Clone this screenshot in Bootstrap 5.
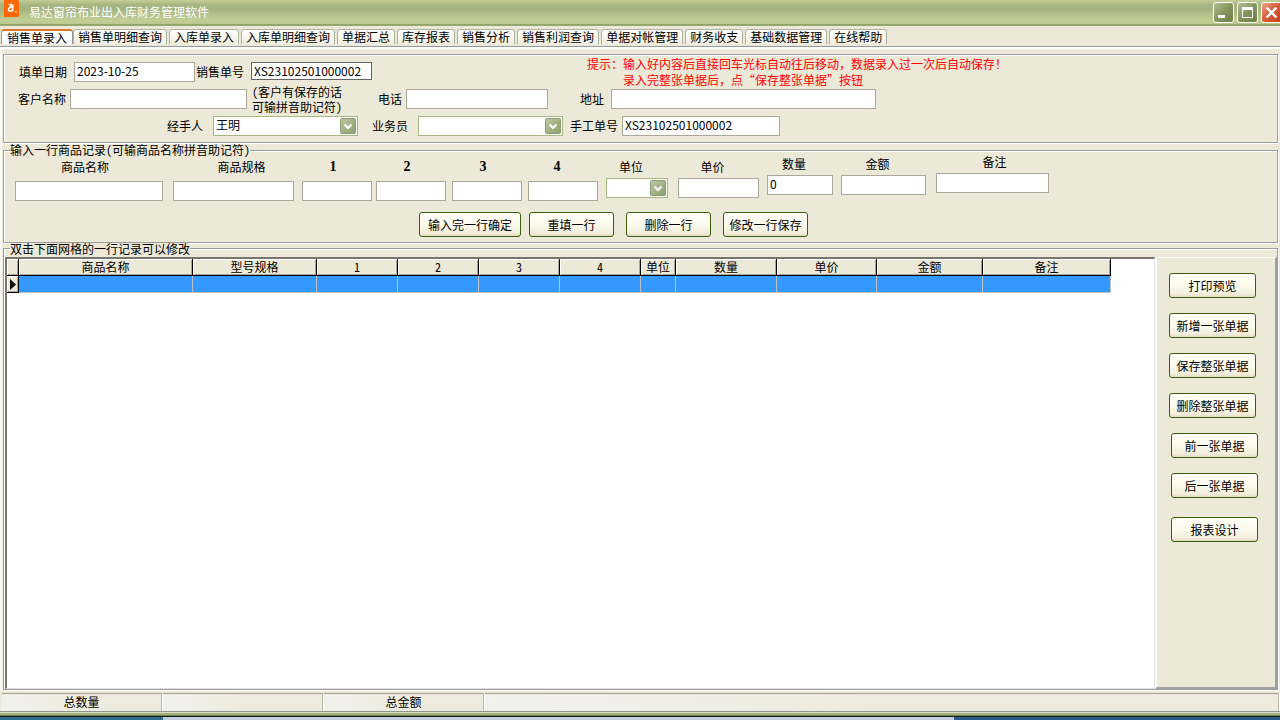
<!DOCTYPE html>
<html lang="zh-CN">
<head>
<meta charset="utf-8">
<meta name="viewport" content="width=device-width, initial-scale=1">
<title>易达窗帘布业出入库财务管理软件</title>
<link href="https://cdn.jsdelivr.net/npm/bootstrap@5.3.0/dist/css/bootstrap.min.css" rel="stylesheet">
<style>
:root{--face:#ece9d8;--edge:#9c9c9c;--field:#aca899}
body{font:12px/14px "Noto Sans CJK SC",sans-serif;font-feature-settings:"hwid";color:#000;background:var(--face)}
label{display:block;white-space:nowrap}
/* title bar */
.titlebar{height:26px;background:linear-gradient(#c3cd96 0,#b9c48d 8%,#a6b581 18%,#a5b47f 35%,#b3c088 55%,#c2cc95 75%,#c0ca93 90%,#93a56c 94%,#9aab72 100%)}
.apptitle{color:#fff;margin:0 0 0 9px;font-size:12px;line-height:24px;font-weight:400}
.winbtns{gap:3px;padding-top:2px;margin-right:-2px}
.winbtn{width:21px;height:21px;padding:0;border:1px solid #fff;border-radius:3px;background:linear-gradient(135deg,#b4be97,#84955c 50%,#6d8146);display:block}
.winbtn svg{display:block}
.winbtn-close{background:linear-gradient(135deg,#eda58c,#d9603c 45%,#c2401a)}
/* tabs */
.tabstrip{height:21px;padding:3px 0 0 1px;border-bottom:1px solid #919b9c;box-shadow:0 2px 0 #fff}
.tabstrip .nav-link{height:15px;margin-right:2px;padding:0 4px;border:1px solid #a9b3a0;border-bottom:0;border-radius:3px 3px 0 0;background:linear-gradient(#fffffb,#f1efe2);color:#000;font-size:12px;line-height:14px;white-space:nowrap}
.tabstrip .nav-link.active{padding:0 5px;margin-right:0;border-color:#919b9c;border-top:2px solid #d9772b;background:#fbfbfc;line-height:13px}
/* group boxes */
.workarea{margin-top:2px;padding:5px 2px 0 1px;border-left:2px solid #f9f9f4}
.groupbox{border:1px solid var(--edge);box-shadow:1px 1px 0 #fff,inset 1px 1px 0 #fff;margin-bottom:1px}
.groupbox legend,.caption{float:none;width:auto;margin:0 0 0 6px;padding:0;font-size:12px;font-weight:400;line-height:12px;background:var(--face)}
.groupbox .caption{align-self:flex-start;margin-top:-6px}
.docform{gap:7px;padding:7px 0 6px 1px}
.formline{display:grid;grid-template-rows:20px;align-items:center;height:20px}
.line-doc{grid-template-columns:69px 121px 56px 121px 215px 1fr}
.line-client{grid-template-columns:65px 177px 127px 32px 142px 63px 265px 1fr}
.line-staff{grid-template-columns:208px 145px 60px 145px 59px 158px 1fr}
.formline label{text-align:right;padding-right:7px}
.formline label.near{padding-right:4px}
.formline label.far{padding-right:10px}
.tip{color:#f00;line-height:16px;white-space:nowrap;font-feature-settings:normal}
.tip span{padding-left:36px}
.clienthint{padding-left:5px;line-height:15px;white-space:nowrap}
.box{display:block;width:100%;height:20px;padding:0 0 3px 2px;border:1px solid var(--field);border-radius:0;background:#fff;color:#000;font-size:12px;line-height:14px}
.box-locked{height:18px;border-color:#646464;padding-bottom:1px;margin-bottom:2px}
select.box{appearance:none;border-color:#a4b97f;background:#fff url("data:image/svg+xml,%3Csvg xmlns='http://www.w3.org/2000/svg' width='16' height='16'%3E%3Cdefs%3E%3ClinearGradient id='g' x2='1' y2='1'%3E%3Cstop stop-color='%23bcc9a2'/%3E%3Cstop offset='1' stop-color='%238b9f6c'/%3E%3C/linearGradient%3E%3C/defs%3E%3Crect x='.5' y='.5' width='15' height='15' rx='1' fill='url(%23g)' stroke='%238c9c78'/%3E%3Cpath d='M4.500 6.500l3.500 3.500 3.500-3.500' fill='none' stroke='%23fff' stroke-width='2.200'/%3E%3C/svg%3E") no-repeat right 1px center}
/* entry line */
.entry{padding-left:11px;height:45px}
.cell label{text-align:center;margin-bottom:7px}
.cell label.num{font-family:"Liberation Serif",serif;font-weight:700;font-size:14px}
.cell label.left{padding-right:12px}
.after4{margin-right:4px}.after6{margin-right:6px}.after8{margin-right:8px}.after10{margin-right:10px}.after12{margin-right:12px}
.rise{margin-bottom:3px}.rise2{margin-bottom:6px}.rise3{margin-bottom:8px}
.rise label,.rise2 label,.rise3 label{margin-bottom:4px}
.w-name{width:148px}.w-spec{width:121px}.w-num{width:70px}.w-unit{width:62px}.w-price{width:81px}.w-qty{width:66px}.w-sum{width:85px}.w-note{width:113px}
.cmd{height:25px;padding:0;border:1px solid #37620b;border-radius:3px;background:linear-gradient(#fffff8,#fbfaec 50%,#f3efdc 85%,#e6dac6);color:#000;font-size:12px;line-height:23px;white-space:nowrap}
.cmd:hover{background:#fff8dc;border-color:#37620b;color:#000}
.cmds{margin:11px 0 5px;padding-left:415px}
.cmds .cmd{width:85px}
.cmds .cmd-wide{width:102px}
/* record grid */
.gridwrap{padding:2px 0 0 1px}
.gridpane{border:solid;border-width:2px 1px 1px 2px;border-color:#77756d #e0e0e0 #e0e0e0 #77756d;background:#fff;overflow:hidden}
.records{table-layout:fixed;width:1104px;border-collapse:separate;border-spacing:0}
.records th,.records td{height:17px;padding:0;font-weight:400;text-align:center;line-height:14px;overflow:hidden;white-space:nowrap}
.records th{background:var(--face);border-right:1px solid #000;border-bottom:1px solid #000;box-shadow:inset 1px 1px 0 #fff,inset -1px -1px 0 #aca899}
.records td{background:#39f;border-right:1px solid #c0c0c0;border-bottom:1px solid #c0c0c0}
.c-mark{width:12px}.c-name{width:174px}.c-spec{width:124px}.c-num{width:81px}.c-unit{width:35px}.c-qty{width:101px}.c-price{width:100px}.c-sum{width:106px}.c-note{width:128px}
.sidepane{width:122px;border:solid;border-width:1px 2px 2px 2px;border-color:#fff #a0a0a0 #a0a0a0 #fff;padding:15px 0 0 12px;gap:15px}
.sidepane .cmd{width:87px}
.sidepane .shifted{margin-left:2px}
/* status bar */
.statusline{margin:2px 1px 0 2px;height:18px;gap:1px}
.statusline>div{width:160px;border-top:1px solid #a19f90;border-right:1px solid #b9b7a2;box-shadow:1px 0 0 #fff;background:linear-gradient(90deg,#f1f1ec,#edebdd 50%);text-align:center;line-height:15px}
.frame{height:6px;background:linear-gradient(#8f9590 0 1px,#dcdcc6 1px 2px,#a3b07d 2px 4px,#6f8150 4px 5px,#17210f 5px)}
.taskedge{height:3px;background:linear-gradient(90deg,#2b6d93 0 163px,#c3cfdf 163px 954px,#285a8c 954px)}
</style>
</head>
<body>
<div class="d-flex flex-column min-vh-100">
<header class="titlebar d-flex align-items-start overflow-hidden">
  <svg class="ms-1" width="16" height="18" viewBox="0 0 16 18" aria-hidden="true"><rect x="-1" width="16" height="17" rx="2" fill="#ff6500"/><path d="M4.500 4.500h3.500M8 4.500c0 1.500-3 2-2.800 3.500M8.500 7.500c-3-.5-4.500 1-3.900 2.900.8 1.500 3.300 1 3.800-.9l.8-5M8.800 7v4.500M11.500 11.500l1 1" fill="none" stroke="#fff" stroke-width="1.400"/></svg>
  <h1 class="apptitle flex-grow-1">易达窗帘布业出入库财务管理软件</h1>
  <div class="winbtns d-flex">
    <button type="button" class="winbtn" aria-label="最小化"><svg width="19" height="19"><rect x="4" y="12" width="7" height="3" fill="#fff"/></svg></button>
    <button type="button" class="winbtn" aria-label="最大化"><svg width="19" height="19"><path d="M4 4h11v11H4zM5 7v7h9V7z" fill="#fff" fill-rule="evenodd"/></svg></button>
    <button type="button" class="winbtn winbtn-close" aria-label="关闭"><svg width="19" height="19"><path d="M4.500 4.500l10 10M14.500 4.500l-10 10" stroke="#fff" stroke-width="2.400"/></svg></button>
  </div>
</header>
<nav class="tabstrip nav flex-nowrap">
  <a class="nav-link active" href="#">销售单录入</a><a class="nav-link" href="#">销售单明细查询</a><a class="nav-link" href="#">入库单录入</a><a class="nav-link" href="#">入库单明细查询</a><a class="nav-link" href="#">单据汇总</a><a class="nav-link" href="#">库存报表</a><a class="nav-link" href="#">销售分析</a><a class="nav-link" href="#">销售利润查询</a><a class="nav-link" href="#">单据对帐管理</a><a class="nav-link" href="#">财务收支</a><a class="nav-link" href="#">基础数据管理</a><a class="nav-link" href="#">在线帮助</a>
</nav>
<main class="workarea d-flex flex-column flex-grow-1">
  <section class="groupbox docform d-flex flex-column">
    <div class="formline line-doc">
      <label for="date">填单日期</label><input class="box" id="date" value="2023-10-25">
      <label for="sale">销售单号</label><input class="box box-locked" id="sale" value="XS23102501000002">
      <span></span>
      <div class="tip">提示：输入好内容后直接回车光标自动往后移动，数据录入过一次后自动保存！<br><span>录入完整张单据后，点“保存整张单据”按钮</span></div>
    </div>
    <div class="formline line-client">
      <label class="near" for="client">客户名称</label><input class="box" id="client">
      <div class="clienthint">(客户有保存的话<br>可输拼音助记符)</div>
      <label class="near" for="phone">电话</label><input class="box" id="phone">
      <label for="addr">地址</label><input class="box" id="addr">
    </div>
    <div class="formline line-staff">
      <label class="far" for="handler">经手人</label><select class="box" id="handler"><option>王明</option></select>
      <label class="far" for="agent">业务员</label><select class="box" id="agent"><option></option></select>
      <label class="near" for="manual">手工单号</label><input class="box" id="manual" value="XS23102501000002">
    </div>
  </section>
  <fieldset class="groupbox">
    <legend>输入一行商品记录(可输商品名称拼音助记符)</legend>
    <div class="entry d-flex align-items-end">
      <div class="cell w-name after10"><label class="pe-2" for="e1">商品名称</label><input class="box" id="e1"></div>
      <div class="cell w-spec after8"><label class="ps-3" for="e2">商品规格</label><input class="box" id="e2"></div>
      <div class="cell w-num after4"><label class="num pe-2" for="e3">1</label><input class="box" id="e3"></div>
      <div class="cell w-num after6"><label class="num pe-2" for="e4">2</label><input class="box" id="e4"></div>
      <div class="cell w-num after6"><label class="num pe-2" for="e5">3</label><input class="box" id="e5"></div>
      <div class="cell w-num after8"><label class="num left" for="e6">4</label><input class="box" id="e6"></div>
      <div class="cell w-unit after10 rise"><label class="left" for="e7">单位</label><select class="box" id="e7"><option></option></select></div>
      <div class="cell w-price after8 rise"><label class="left" for="e8">单价</label><input class="box" id="e8"></div>
      <div class="cell w-qty after8 rise2"><label class="left" for="e9">数量</label><input class="box" id="e9" value="0"></div>
      <div class="cell w-sum after10 rise2"><label class="left" for="e10">金额</label><input class="box" id="e10"></div>
      <div class="cell w-note rise3"><label class="ps-1" for="e11">备注</label><input class="box" id="e11"></div>
    </div>
    <div class="cmds d-flex">
      <button type="button" class="btn cmd cmd-wide after8">输入完一行确定</button>
      <button type="button" class="btn cmd after12">重填一行</button>
      <button type="button" class="btn cmd after12">删除一行</button>
      <button type="button" class="btn cmd">修改一行保存</button>
    </div>
  </fieldset>
  <section class="groupbox d-flex flex-column flex-grow-1 mt-1">
    <h2 class="caption">双击下面网格的一行记录可以修改</h2>
    <div class="gridwrap d-flex flex-grow-1">
      <div class="gridpane flex-grow-1">
        <table class="records">
          <colgroup><col class="c-mark"><col class="c-name"><col class="c-spec"><col class="c-num"><col class="c-num"><col class="c-num"><col class="c-num"><col class="c-unit"><col class="c-qty"><col class="c-price"><col class="c-sum"><col class="c-note"></colgroup>
          <thead><tr><th></th><th>商品名称</th><th>型号规格</th><th>1</th><th>2</th><th>3</th><th>4</th><th>单位</th><th>数量</th><th>单价</th><th>金额</th><th>备注</th></tr></thead>
          <tbody><tr><th><svg class="d-block mx-auto" width="7" height="11" aria-hidden="true"><path d="M1 0l6 5.500-6 5.500z"/></svg></th><td></td><td></td><td></td><td></td><td></td><td></td><td></td><td></td><td></td><td></td><td></td></tr></tbody>
        </table>
      </div>
      <div class="sidepane d-flex flex-column flex-shrink-0">
        <button type="button" class="btn cmd">打印预览</button>
        <button type="button" class="btn cmd">新增一张单据</button>
        <button type="button" class="btn cmd">保存整张单据</button>
        <button type="button" class="btn cmd">删除整张单据</button>
        <button type="button" class="btn cmd shifted">前一张单据</button>
        <button type="button" class="btn cmd shifted">后一张单据</button>
        <button type="button" class="btn cmd shifted mt-1">报表设计</button>
      </div>
    </div>
  </section>
</main>
<footer>
  <div class="statusline d-flex"><div>总数量</div><div></div><div>总金额</div><div class="flex-grow-1"></div></div>
  <div class="frame"></div>
  <div class="taskedge"></div>
</footer>
</div>
<script src="https://cdn.jsdelivr.net/npm/bootstrap@5.3.0/dist/js/bootstrap.bundle.min.js"></script>
</body>
</html>
